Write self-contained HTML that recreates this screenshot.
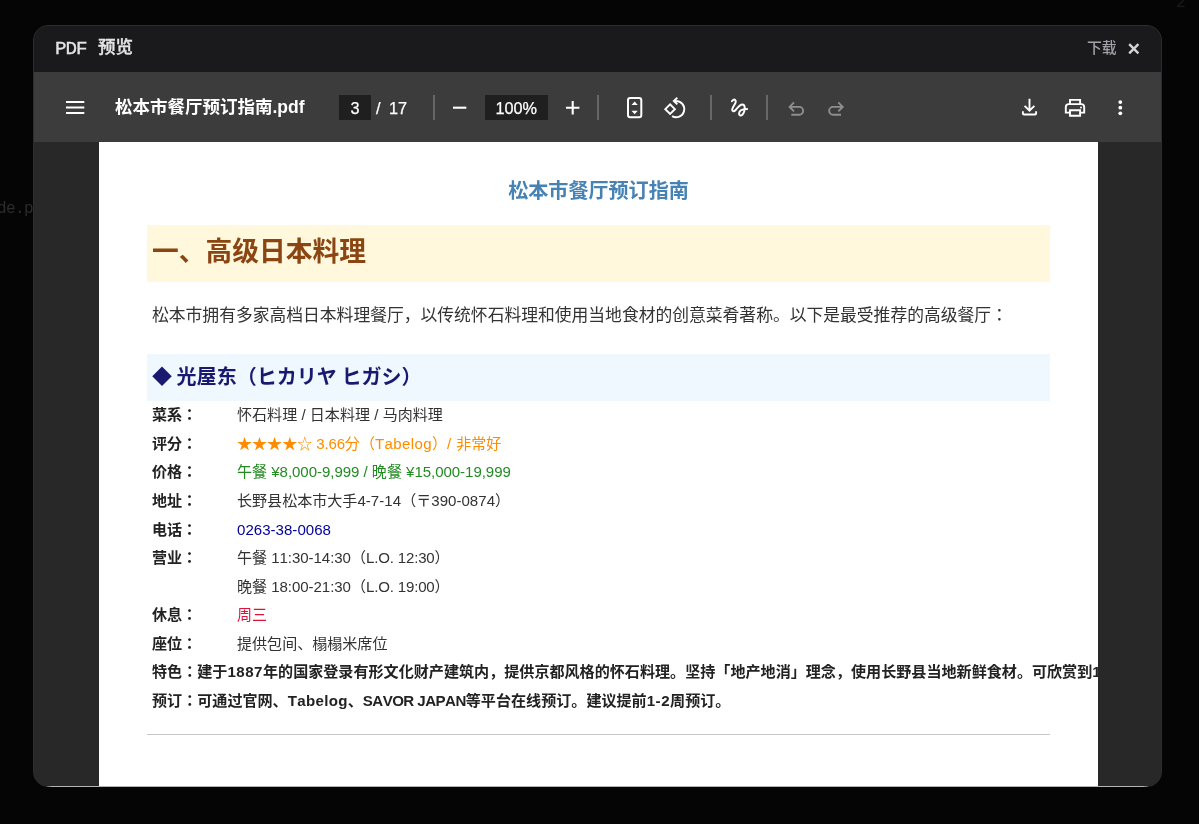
<!DOCTYPE html>
<html lang="zh-CN">
<head>
<meta charset="utf-8">
<title>PDF 预览</title>
<style>
*{box-sizing:border-box;margin:0;padding:0}
html,body{width:1199px;height:824px;overflow:hidden;background:#050505}
body{position:relative;font-family:"Liberation Sans","Noto Sans CJK SC",sans-serif;color:#fff}
.abs{position:absolute}
.t,.dl,.tb-title,.box,.tbt,.bgtxt{will-change:transform}
.bgtxt{position:absolute;left:-3.5px;top:199px;font-family:"Liberation Mono",monospace;font-size:16px;letter-spacing:-.6px;line-height:20px;color:#2c2c2e;white-space:pre}
.modal{position:absolute;left:33px;top:25px;width:1129px;height:762px;border-radius:15px;background:#282828;border:1px solid #2d2d30;overflow:hidden}
.inner{position:absolute;left:-34px;top:-26px;width:1199px;height:824px}
.titlebar{position:absolute;left:33px;top:25px;width:1130px;height:47px;background:#1a1a1c}
.t{position:absolute;left:55px;top:38px;font-weight:500;-webkit-text-stroke:.35px #e4e4e7;font-family:"Liberation Mono","Noto Sans CJK SC",monospace;font-size:17.5px;line-height:22px;color:#e4e4e7;white-space:pre}
.dl{position:absolute;left:1086.5px;top:36.7px;font-weight:500;font-size:14.8px;line-height:22px;color:#a1a1aa;white-space:pre}
.toolbar{position:absolute;left:33px;top:72px;width:1130px;height:70px;background:#3c3c3c}
.tb-title{position:absolute;left:115px;top:95px;font-size:17.5px;line-height:24px;font-weight:bold;color:#fff;white-space:pre}
.box,.tbt{-webkit-text-stroke:.25px #fff}
.box{position:absolute;top:95px;height:25px;background:#1f1f1f;color:#fff;font-size:16.25px;line-height:27px;text-align:center}
.tbt{position:absolute;top:96px;font-size:16.25px;line-height:25px;color:#fff;white-space:pre}
.sep{position:absolute;top:94.5px;width:2px;height:25px;background:#676767}
.viewer{position:absolute;left:33px;top:142px;width:1130px;height:645px;background:#282828}
.botline{position:absolute;left:47px;top:786px;width:1101px;height:1px;background:linear-gradient(90deg,#555,#b4b4b4 5px,#b4b4b4 1096px,#555)}
.page{position:absolute;left:99px;top:142px;width:999px;height:660px;background:#fff;color:#333}
.pdf{will-change:transform;font-kerning:none;position:absolute;left:0;top:0;width:1098px;height:824px;overflow:hidden;font-family:"Liberation Sans","Noto Sans CJK JP",sans-serif}
.pdf div,.pdf span,.pdf b{white-space:pre}
.doc-title{position:absolute;left:99px;width:999px;top:177px;text-align:center;font-size:20.07px;line-height:28px;font-weight:bold;color:#4682b4}
.h1{position:absolute;left:147px;top:225px;width:903px;height:57px;background:#fff8dc}
.h1>span{position:absolute;left:5px;top:8px;font-size:26.75px;line-height:38px;font-weight:bold;color:#8b4513}
.para{position:absolute;left:152px;top:303px;font-size:16.79px;line-height:26px;color:#333}
.h2{position:absolute;left:147px;top:354px;width:903px;height:47px;background:#f0f8ff}
.h2>span{position:absolute;left:5px;top:8px;font-size:20.05px;line-height:30px;font-weight:bold;color:#191970}
.row{position:absolute;left:152px;font-size:15.05px;line-height:22px;color:#333}
.row b{font-weight:bold;color:#222}
.row .v{position:absolute;left:85px;top:0}
.hr{position:absolute;left:147px;top:734px;width:903px;height:1px;background:#c8c8c8}
</style>
</head>
<body>
<div class="bgtxt">de.p</div>
<div class="bgtxt" style="left:1176px;top:-7px;color:#1b1b1b">2</div>
<div class="modal"><div class="inner">
  <div class="viewer"></div>
  <div class="page"></div>
  <div class="pdf" lang="ja">
  <div class="doc-title">松本市餐厅预订指南</div>
  <div class="h1"><span>一、高级日本料理</span></div>
  <div class="para">松本市拥有多家高档日本料理餐厅，以传统怀石料理和使用当地食材的创意菜肴著称。以下是最受推荐的高级餐厅：</div>
  <div class="h2"><span>◆<span style="letter-spacing:-1.014px"> </span>光屋东（ヒカリヤ<span style="letter-spacing:-1.014px"> </span>ヒガシ）</span></div>
  <div class="row" style="top:404.3px"><b>菜系：</b><span class="v" style="">怀石料理<span style="letter-spacing:0.033px"> / </span>日本料理<span style="letter-spacing:0.033px"> / </span>马肉料理</span></div>
  <div class="row" style="top:432.9px"><b>评分：</b><span class="v" style="color:#ff8c00">★★★★☆<span style="letter-spacing:-0.172px"> 3.66</span>分（<span style="letter-spacing:0.375px">Tabelog</span>）<span style="letter-spacing:0.454px">/ </span>非常好</span></div>
  <div class="row" style="top:461.4px"><b>价格：</b><span class="v" style="color:#228b22">午餐<span style="letter-spacing:-0.041px"> ¥8,000-9,999 / </span>晚餐<span style="letter-spacing:-0.052px"> ¥15,000-19,999</span></span></div>
  <div class="row" style="top:490.0px"><b>地址：</b><span class="v" style="">长野县松本市大手<span style="letter-spacing:0.059px">4-7-14</span>（〒<span style="letter-spacing:0.011px">390-0874</span>）</span></div>
  <div class="row" style="top:518.5px"><b>电话：</b><span class="v" style="color:#00009c"><span style="letter-spacing:0.021px">0263-38-0068</span></span></div>
  <div class="row" style="top:547.1px"><b>营业：</b><span class="v" style="">午餐<span style="letter-spacing:-0.061px"> 11:30-14:30</span>（<span style="letter-spacing:-0.161px">L.O. 12:30</span>）</span></div>
  <div class="row" style="top:575.7px"><b></b><span class="v" style="">晚餐<span style="letter-spacing:-0.061px"> 18:00-21:30</span>（<span style="letter-spacing:-0.161px">L.O. 19:00</span>）</span></div>
  <div class="row" style="top:604.2px"><b>休息：</b><span class="v" style="color:#dc143c">周三</span></div>
  <div class="row" style="top:632.8px"><b>座位：</b><span class="v" style="">提供包间、榻榻米席位</span></div>
  <div class="row" style="top:661.3px;font-size:15.08px"><b>特色：建于<span style="letter-spacing:0.509px">1887</span>年的国家登录有形文化财产建筑内，提供京都风格的怀石料理。坚持「地产地消」理念，使用长野县当地新鲜食材。可欣赏到<span style="letter-spacing:0.509px">1</span></b></div>
  <div class="row" style="top:689.9px;font-size:15.09px"><b>预订：可通过官网、<span style="letter-spacing:0.313px">Tabelog</span>、<span style="letter-spacing:-0.540px">SAVOR JAPAN</span>等平台在线预订。建议提前<span style="letter-spacing:0.525px">1-2</span>周预订。</b></div>
  <div class="hr"></div>
  </div>

  <div class="titlebar"></div>
  <span class="t"><span style="font-size:19.2px;letter-spacing:-1px">PDF</span> <span style="position:relative;left:1px;top:-.6px">预览</span></span>
  <span class="dl">下载</span>
  <svg class="abs" style="left:1126px;top:41px" width="16" height="16" viewBox="0 0 16 16"><path d="M3.2 3.2 L12.4 12.4 M12.4 3.2 L3.2 12.4" stroke="#d4d4d8" stroke-width="2.4" fill="none"/></svg>
  <div class="toolbar"></div>
  <svg class="abs" style="left:0;top:72px" width="1199" height="70" viewBox="0 72 1199 70" fill="none" stroke="#fff" stroke-width="2">
    <!-- menu -->
    <path d="M66 102h18.3M66 107.5h18.3M66 113h18.3" stroke-width="2.1"/>
    <!-- minus / plus -->
    <path d="M453 107.7h13.3" stroke-width="2.1"/>
    <path d="M566 107.7h13.4M572.7 101v13.4" stroke-width="2.1"/>
    <!-- fit to height -->
    <rect x="628" y="98" width="13.3" height="19.2" rx="2.2"/>
    <path d="M631.5 105l3.15-3.4 3.15 3.4zM631.5 110.8l3.15 3.4 3.15-3.4z" fill="#fff" stroke="none"/>
    <!-- rotate ccw -->
    <path d="M665.3 109.2l4.8-4.8 4.8 4.8-4.8 4.8z" stroke-width="1.9"/>
    <path d="M677.3 97.7l-3.5 3.3 3.5 3.4M674 101H676.1A8.1 8.1 0 1 1 672.1 116.1" stroke-width="1.9"/>
    <!-- ink -->
    <path d="M731.9 101.2C732.8 99.9 734.6 98.6 735.6 100.6C736.8 103 732.6 106.5 732.2 109.3C731.9 111.6 734 111.9 735.6 110C737.6 107.6 740 104.4 742.4 104.5C745 104.6 745.2 108.5 744.2 111.5C743.3 114.2 741.5 116 740 115.3C738.4 114.5 739 112 740.6 110.6C742.4 109.1 745 108.9 747.1 108.9" stroke-width="1.95" stroke-linecap="round"/>
    <!-- undo / redo -->
    <g stroke="#8e8e8e" stroke-width="1.9">
      <path d="M794 102.4l-4.4 4.5 4.4 4.5M790 106.9h9.2a3.95 3.95 0 0 1 0 7.9h-7.9"/>
      <path d="M838.3 102.4l4.4 4.5-4.4 4.5M842.3 106.9h-9.2a3.95 3.95 0 0 0 0 7.9h7.9"/>
    </g>
    <!-- download -->
    <path d="M1029.5 98.7v11.2M1024.6 105.8l4.9 4.9 4.9-4.9M1022.9 111.2v2.2q0 1.1 1.1 1.1h11q1.1 0 1.1-1.1v-2.2" stroke-width="1.9"/>
    <!-- print -->
    <path d="M1070 104v-4.1h10.1v4.1M1070 112.6h-4.2v-5.6q0-2.9 2.9-2.9h12.6q2.9 0 2.9 2.9v5.6h-4.2M1070 110.3h10.1v5.4h-10.1z" stroke-width="1.9"/>
    <circle cx="1081" cy="107.4" r="1" fill="#fff" stroke="none"/>
    <!-- more -->
    <g fill="#fff" stroke="none"><circle cx="1120.3" cy="102.1" r="1.9"/><circle cx="1120.3" cy="107.7" r="1.9"/><circle cx="1120.3" cy="113.3" r="1.9"/></g>
  </svg>
  <span class="tb-title">松本市餐厅预订指南.pdf</span>
  <div class="box" style="left:339px;width:32px">3</div>
  <span class="tbt" style="left:376px">/</span>
  <span class="tbt" style="left:388.5px">17</span>
  <div class="sep" style="left:433px"></div>
  <div class="box" style="left:485px;width:62.5px">100%</div>
  <div class="sep" style="left:597px"></div>
  <div class="sep" style="left:710px"></div>
  <div class="sep" style="left:766px"></div>

</div></div>
<div class="botline"></div>
</body>
</html>
